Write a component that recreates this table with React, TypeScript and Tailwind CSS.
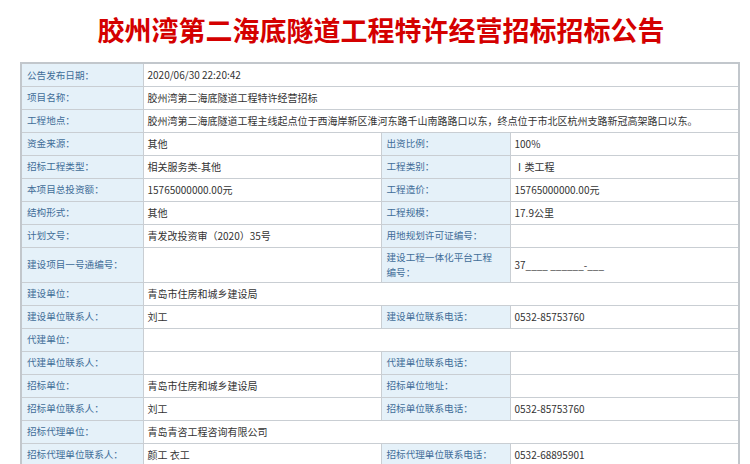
const font = { fontFamily: '"Noto Sans CJK SC", "Liberation Sans", sans-serif' };

type Row = {
  label: string;
  value?: string;
  label2?: React.ReactNode;
  value2?: string;
  tall?: boolean;
};

const ROWS: Row[] = [
  { label: "公告发布日期：", value: "2020/06/30 22:20:42" },
  { label: "项目名称：", value: "胶州湾第二海底隧道工程特许经营招标" },
  {
    label: "工程地点：",
    value: "胶州湾第二海底隧道工程主线起点位于西海岸新区淮河东路千山南路路口以东，终点位于市北区杭州支路新冠高架路口以东。",
  },
  { label: "资金来源：", value: "其他", label2: "出资比例：", value2: "100%" },
  { label: "招标工程类型：", value: "相关服务类-其他", label2: "工程类别：", value2: "Ⅰ类工程" },
  { label: "本项目总投资额：", value: "15765000000.00元", label2: "工程造价：", value2: "15765000000.00元" },
  { label: "结构形式：", value: "其他", label2: "工程规模：", value2: "17.9公里" },
  { label: "计划文号：", value: "青发改投资审（2020）35号", label2: "用地规划许可证编号：", value2: "" },
  {
    label: "建设项目一号通编号：",
    value: "",
    label2: (
      <>
        建设工程一体化平台工程
        <br />
        编号：
      </>
    ),
    value2: "37____ ______-___",
    tall: true,
  },
  { label: "建设单位：", value: "青岛市住房和城乡建设局" },
  { label: "建设单位联系人：", value: "刘工", label2: "建设单位联系电话：", value2: "0532-85753760" },
  { label: "代建单位：", value: "" },
  { label: "代建单位联系人：", value: "", label2: "代建单位联系电话：", value2: "" },
  { label: "招标单位：", value: "青岛市住房和城乡建设局", label2: "招标单位地址：", value2: "" },
  { label: "招标单位联系人：", value: "刘工", label2: "招标单位联系电话：", value2: "0532-85753760" },
  { label: "招标代理单位：", value: "青岛青咨工程咨询有限公司" },
  { label: "招标代理单位联系人：", value: "颜工 衣工", label2: "招标代理单位联系电话：", value2: "0532-68895901" },
  // next row is cut off by the window edge
  { label: "", value: "" },
];

const labelCls =
  "border border-[#c9ced3] bg-[#e5f1f9] text-[#3f6d98] text-[9.6px] pl-[5px] pr-1 py-0 align-middle text-left font-normal";
const valueCls = "border border-[#c9ced3] bg-white text-[#333] text-[10px] pl-[4px] pr-1 py-0 align-middle";

export default function App() {
  return (
    <div className="w-[750px] h-[464px] overflow-hidden bg-white" style={font}>
      <h1 className="text-center text-[27px] leading-[32px] font-bold text-[#d40000] pt-[14px] pl-[12px]">
        胶州湾第二海底隧道工程特许经营招标招标公告
      </h1>

      <table className="ml-[20px] mt-[16px] w-[720px] border-collapse border-2 border-[#c2c7cc] table-fixed">
        <colgroup>
          <col className="w-[122px]" />
          <col className="w-[238px]" />
          <col className="w-[129px]" />
          <col />
        </colgroup>
        <tbody>
          {ROWS.map((r, i) => (
            <tr key={i} className={r.tall ? "h-[35px]" : "h-[23px]"}>
              <th className={labelCls}>{r.label}</th>
              {r.label2 === undefined ? (
                <td className={valueCls} colSpan={3}>
                  {r.value}
                </td>
              ) : (
                <>
                  <td className={valueCls}>{r.value}</td>
                  <th className={labelCls + " leading-[15px]"}>{r.label2}</th>
                  <td className={valueCls}>{r.value2}</td>
                </>
              )}
            </tr>
          ))}
        </tbody>
      </table>
    </div>
  );
}
